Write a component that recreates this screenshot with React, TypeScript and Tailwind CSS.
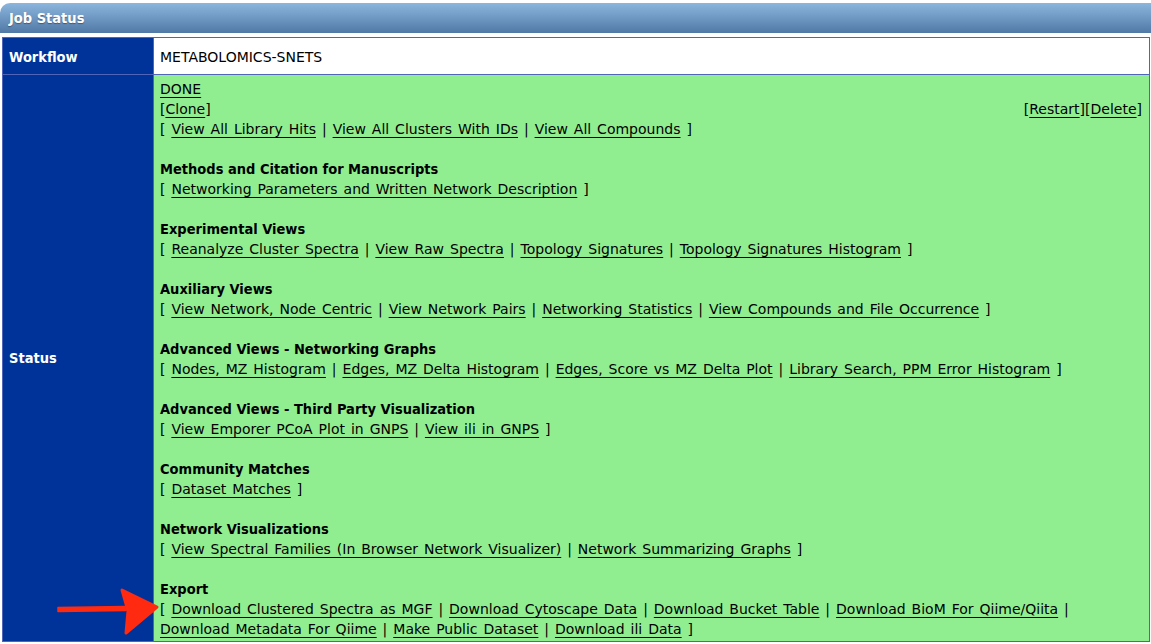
import React from 'react';

type Link = string;

interface Section {
  title: string;
  lines: Link[][];
}

const sections: Section[] = [
  { title: 'Methods and Citation for Manuscripts', lines: [['Networking Parameters and Written Network Description']] },
  {
    title: 'Experimental Views',
    lines: [['Reanalyze Cluster Spectra', 'View Raw Spectra', 'Topology Signatures', 'Topology Signatures Histogram']],
  },
  {
    title: 'Auxiliary Views',
    lines: [['View Network, Node Centric', 'View Network Pairs', 'Networking Statistics', 'View Compounds and File Occurrence']],
  },
  {
    title: 'Advanced Views - Networking Graphs',
    lines: [['Nodes, MZ Histogram', 'Edges, MZ Delta Histogram', 'Edges, Score vs MZ Delta Plot', 'Library Search, PPM Error Histogram']],
  },
  {
    title: 'Advanced Views - Third Party Visualization',
    lines: [['View Emporer PCoA Plot in GNPS', 'View ili in GNPS']],
  },
  { title: 'Community Matches', lines: [['Dataset Matches']] },
  {
    title: 'Network Visualizations',
    lines: [['View Spectral Families (In Browser Network Visualizer)', 'Network Summarizing Graphs']],
  },
];

const boldFont = '"DejaVu Sans Condensed", "DejaVu Sans", Verdana, sans-serif';

const A: React.FC<{ children: React.ReactNode }> = ({ children }) => (
  <a href="#" className="text-black underline underline-offset-[3px] decoration-1">
    {children}
  </a>
);

// bold heading / label text
const B: React.FC<{ children: React.ReactNode; className?: string }> = ({ children, className = '' }) => (
  <span className={`font-bold text-[14.5px] ${className}`} style={{ fontFamily: boldFont }}>
    {children}
  </span>
);

// renders "[ a | b | c ]"
const LinkLine: React.FC<{ links: Link[]; open?: boolean; close?: boolean }> = ({ links, open = true, close = true }) => (
  <div className="h-5 leading-5 whitespace-nowrap">
    {open && '[ '}
    {links.map((l, i) => (
      <React.Fragment key={l}>
        {i > 0 && ' | '}
        <A>{l}</A>
      </React.Fragment>
    ))}
    {close ? ' ]' : ' |'}
  </div>
);

const Arrow = () => (
  <svg className="absolute left-[56px] top-[587px]" width="104" height="50" viewBox="0 0 104 50">
    <path
      d="M2 20.5 L70 19.5 L70 23.5 L2 24.5 Z"
      fill="#ff2a10"
      stroke="#ff2a10"
      strokeWidth="1.5"
      strokeLinejoin="round"
    />
    <path d="M66 3 L101 20 L70 46 L72 24 Z" fill="#ff2a10" stroke="#ff2a10" strokeWidth="3" strokeLinejoin="round" />
  </svg>
);

export default function App() {
  return (
    <div
      className="relative w-[1151px] h-[644px] bg-white text-[14px] text-black overflow-hidden [word-spacing:1.5px]"
      style={{ fontFamily: '"DejaVu Sans", Verdana, sans-serif' }}
    >
      <div className="h-[3px]" />
      <div className="h-[30px] rounded-tl-[10px] bg-gradient-to-b from-[#8db6de] to-[#5079a6] pl-[9px] pt-[2px] flex items-center text-white [text-shadow:0_1px_1px_rgba(0,0,0,0.35)] [word-spacing:0]">
        <B>Job Status</B>
      </div>
      <div className="h-[4px]" />
      <table className="ml-[2px] w-[1148px] border-collapse border border-[#5064b8]">
        <tbody>
          <tr className="h-[37px]">
            <td className="w-[151px] bg-[#003399] border border-[#5064b8] pl-[6px] pt-[3px] text-white align-middle">
              <B>Workflow</B>
            </td>
            <td className="bg-white border border-[#5064b8] pl-[6px] pt-[3px] align-middle">METABOLOMICS-SNETS</td>
          </tr>
          <tr className="h-[567px]">
            <td className="bg-[#003399] border border-[#5064b8] pl-[6px] pt-[2px] text-white align-middle">
              <B>Status</B>
            </td>
            <td className="bg-[#90ee90] border border-[#5064b8] pl-[6px] pr-[7px] pt-[4px] pb-[2px] align-top">
              <div className="h-5 leading-5">
                <A>DONE</A>
              </div>
              <div className="h-5 leading-5 flex justify-between">
                <span>
                  [<A>Clone</A>]
                </span>
                <span>
                  [<A>Restart</A>][<A>Delete</A>]
                </span>
              </div>
              <LinkLine links={['View All Library Hits', 'View All Clusters With IDs', 'View All Compounds']} />
              {sections.map((s) => (
                <div key={s.title}>
                  <div className="h-5" />
                  <div className="h-5 leading-5 [word-spacing:0]">
                    <B>{s.title}</B>
                  </div>
                  {s.lines.map((l, i) => (
                    <LinkLine key={i} links={l} />
                  ))}
                </div>
              ))}
              <div className="h-5" />
              <div className="h-5 leading-5 [word-spacing:0]">
                <B>Export</B>
              </div>
              <LinkLine
                links={['Download Clustered Spectra as MGF', 'Download Cytoscape Data', 'Download Bucket Table', 'Download BioM For Qiime/Qiita']}
                close={false}
              />
              <LinkLine links={['Download Metadata For Qiime', 'Make Public Dataset', 'Download ili Data']} open={false} />
            </td>
          </tr>
        </tbody>
      </table>
      <Arrow />
    </div>
  );
}
